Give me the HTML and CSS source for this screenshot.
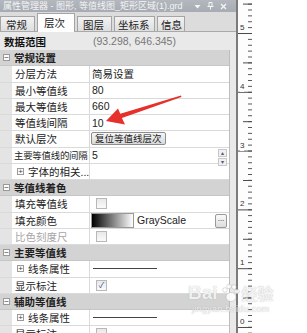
FILE: index.html
```html
<!DOCTYPE html>
<html lang="zh">
<head>
  <meta charset="UTF-8">
  <meta name="viewport" content="width=device-width, initial-scale=1.0">
  <title>属性管理器</title>
  <link rel="stylesheet" href="styles.css">
</head>
<body>
  <div class="app">
    <div class="panel">
      <div class="titlebar">
        <span class="title">属性管理器 - 图形, 等值线图_矩形区域(1).grd</span>
        <span class="ctrls">
          <svg width="7" height="7" viewBox="0 0 7 7"><path d="M0.5 2h6L3.5 5.5z" fill="#f6f6f6"/></svg>
          <svg width="7" height="8" viewBox="0 0 7 8"><path d="M2 0.5h3v4H2zM0.5 4.5h6M3.5 4.5v3" stroke="#f6f6f6" fill="none"/></svg>
          <svg width="7" height="7" viewBox="0 0 7 7"><path d="M1 1l5 5M6 1L1 6" stroke="#f6f6f6" stroke-width="1.3"/></svg>
        </span>
      </div>

      <div class="tabs">
        <div class="tab w35">常规</div>
        <div class="tab active">层次</div>
        <div class="tab w35">图层</div>
        <div class="tab w41">坐标系</div>
        <div class="tab w28">信息</div>
      </div>

      <div class="content">
        <div class="summary">
          <b>数据范围</b>
          <span class="range">(93.298, 646.345)</span>
        </div>

        <div class="grid">
          <div class="cat"><span class="tog">−</span>常规设置</div>
          <div class="row"><div class="gut"></div><div class="name">分层方法</div><div class="val">简易设置</div></div>
          <div class="row"><div class="gut"></div><div class="name">最小等值线</div><div class="val">80</div></div>
          <div class="row"><div class="gut"></div><div class="name">最大等值线</div><div class="val">660</div></div>
          <div class="row"><div class="gut"></div><div class="name">等值线间隔</div><div class="val">10</div></div>
          <div class="row"><div class="gut"></div><div class="name">默认层次</div><div class="val"><button class="btn">复位等值线层次</button></div></div>
          <div class="row"><div class="gut"></div><div class="name tight">主要等值线的间隔</div><div class="val">5<span class="spin"><i>▴</i><i>▾</i></span></div></div>
          <div class="row"><div class="gut"></div><div class="name sub"><span class="tog">+</span>字体的相关...</div><div class="val"></div></div>

          <div class="cat"><span class="tog">−</span>等值线着色</div>
          <div class="row"><div class="gut"></div><div class="name">填充等值线</div><div class="val"><span class="check"></span></div></div>
          <div class="row"><div class="gut"></div><div class="name">填充颜色</div><div class="val"><span class="ramp"></span>GrayScale<span class="more">...</span></div></div>
          <div class="row"><div class="gut"></div><div class="name disabled">比色刻度尺</div><div class="val"><span class="check"></span></div></div>

          <div class="cat"><span class="tog">−</span>主要等值线</div>
          <div class="row"><div class="gut"></div><div class="name sub"><span class="tog">+</span>线条属性</div><div class="val"><span class="line"></span></div></div>
          <div class="row"><div class="gut"></div><div class="name">显示标注</div><div class="val"><span class="check on">✓</span></div></div>

          <div class="cat"><span class="tog">−</span>辅助等值线</div>
          <div class="row"><div class="gut"></div><div class="name sub"><span class="tog">+</span>线条属性</div><div class="val"><span class="line"></span></div></div>
          <div class="row"><div class="gut"></div><div class="name">显示标注</div><div class="val"><span class="check"></span></div></div>
        </div>
      </div>
    </div>

    <div class="splitter"></div>

    <div class="ruler">
      <div class="seg first"><span>5</span></div>
      <div class="seg"><span>4</span></div>
      <div class="seg"><span>3</span></div>
      <div class="seg"><span>2</span></div>
      <div class="seg"><span>1</span></div>
      <div class="seg"><span>0</span></div>
    </div>
  </div>

  <!-- 红色箭头 -->
  <svg class="arrow" width="307" height="333" viewBox="0 0 307 333">
    <polygon points="106,121 118,108.5 120.3,113.8 181,95.6 181.4,96.9 121.9,118 125,124.5" fill="#e5302b"/>
  </svg>

  <div class="watermark">
    <div class="wm-top">Bai<svg width="20" height="20" viewBox="0 0 20 20"><circle cx="5" cy="7" r="2.3"/><circle cx="9" cy="3.5" r="2.3"/><circle cx="14" cy="4" r="2.3"/><circle cx="17" cy="8.5" r="2.3"/><ellipse cx="11" cy="14" rx="5" ry="4.5"/></svg><span class="cn">经验</span></div>
    <div class="wm-url">jingyan.baidu.com</div>
  </div>
</body>
</html>
```

FILE: styles.css
```css
/* 基本样式 */
body { margin: 0; width: 307px; height: 333px; overflow: hidden; background: #fff; font-family: "Liberation Sans", "Noto Sans CJK SC", sans-serif; font-size: 10px; color: #222; position: relative; }
.app { display: flex; height: 333px; }

.panel { width: 236px; background: #e9e9e9; display: flex; flex-direction: column; }

/* 标题栏 */
.titlebar { height: 12px; flex: none; display: flex; align-items: center; justify-content: space-between; padding: 0 9px 0 3px; background: linear-gradient(#b3b7be, #a7acb4); color: #f4f4f4; font-size: 9px; line-height: 12px; white-space: nowrap; }
.title { overflow: hidden; text-overflow: clip; }
.ctrls { display: flex; align-items: center; gap: 6px; padding-left: 8px; flex: none; }

/* 选项卡 */
.tabs { height: 19px; flex: none; display: flex; align-items: flex-end; gap: 2px; background: #dcdcdc; border-bottom: 1px solid #a9a9a9; }
.tab { height: 15px; box-sizing: border-box; padding-left: 5px; display: flex; align-items: center; font-size: 10.5px; background: linear-gradient(#f2f2f2, #dedede); border: 1px solid #a4a4a4; border-bottom: none; color: #222; }
.tab.w35 { width: 35px; }
.tab.w41 { width: 41px; padding-left: 3px; }
.tab.w28 { width: 28px; padding-left: 3px; }
.tab.active { width: 38px; height: 19px; margin-bottom: -1px; background: #fff; padding: 0 0 2px 6px; }

.content { flex: 1; padding-right: 6px; }

.summary { height: 18px; display: flex; align-items: center; padding-left: 4px; }
.summary b { width: 89px; font-size: 10.5px; color: #111; }
.range { color: #777; font-size: 10.5px; }

/* 属性表格 */
.grid { border-right: 1px solid #bdbdbd; }
.cat, .row { height: 16.25px; box-sizing: border-box; display: flex; align-items: center; }
.cat { background: #d3d3d3; font-weight: bold; font-size: 10.5px; color: #222; padding-left: 3px; border-bottom: 1px solid #c6c6c6; }
.cat .tog { margin-right: 4px; }
.row { border-bottom: 1px solid #dadada; background: #fff; }
.gut { width: 12px; height: 100%; background: #e4e4e4; flex: none; }
.name { width: 78px; height: 100%; box-sizing: border-box; padding-left: 3px; border-right: 1px solid #dadada; display: flex; align-items: center; font-size: 10.5px; white-space: nowrap; overflow: hidden; flex: none; }
.name.tight { font-size: 9.4px; letter-spacing: -0.2px; padding-left: 2px; }
.name.sub .tog { margin: 0 4px 0 2px; }
.name.disabled { color: #a6a6a6; }
.val { flex: 1; height: 100%; display: flex; align-items: center; padding-left: 2px; font-size: 10.5px; white-space: nowrap; position: relative; }

.tog { width: 7px; height: 7px; box-sizing: border-box; border: 1px solid #9a9a9a; background: #fbfbfb; font-size: 8px; line-height: 5px; text-align: center; font-weight: normal; color: #444; flex: none; }

.btn { height: 13px; padding: 0 3px; margin-left: -1px; font-family: inherit; font-size: 9.5px; line-height: 11px; border: 1px solid #8d8d8d; border-radius: 2px; background: linear-gradient(#f6f6f6, #d9d9d9); color: #222; }

.spin { position: absolute; right: 2px; top: 1px; display: flex; flex-direction: column; width: 9px; }
.spin i { height: 6px; font-style: normal; font-size: 6px; line-height: 6px; text-align: center; color: #556; background: #eef0f4; border: 1px solid #c8c8c8; margin-bottom: 1px; }

.check { width: 9px; height: 9px; margin-left: 4px; border: 1px solid #b8b8b8; background: linear-gradient(#e8e8e8, #fafafa); font-size: 8px; line-height: 9px; text-align: center; color: #2e4e8a; }

.ramp { width: 41px; height: 13px; margin-left: -1px; margin-right: 3px; border: 1px solid #999; background: linear-gradient(to right, #000, #fff); }
.more { position: absolute; right: 2px; top: 1px; width: 10px; height: 12px; border: 1px solid #999; border-radius: 2px; background: linear-gradient(#fafafa, #dcdcdc); font-size: 8px; line-height: 8px; text-align: center; }

.line { width: 64px; height: 1px; margin-left: 1px; background: #444; }

/* 分隔条与标尺 */
.splitter { width: 2px; background: #7b7b7b; }
.ruler { width: 14px; background-color: #fdfdfd;
  background-image:
    linear-gradient(to bottom, #4a4a4a 0 1px, transparent 1px),
    linear-gradient(to bottom, #4a4a4a 0 1px, transparent 1px),
    linear-gradient(to bottom, #555 0 1px, transparent 1px);
  background-size: 14px 58.8px, 9px 58.8px, 4px 5.88px;
  background-position: 0 33px, right 0 top 62.4px, right 0 top 33px;
  background-repeat: repeat-y; }
.seg { height: 58.8px; display: flex; align-items: flex-end; padding-left: 2px; font-size: 8px; line-height: 9px; color: #333; }
.seg.first { height: 33px; }
.seg span { padding-bottom: 1px; background: #fdfdfd; }

/* 覆盖层 */
.arrow { position: absolute; left: 0; top: 0; pointer-events: none; }
.watermark { position: absolute; left: 188px; top: 282px; color: rgba(255,255,255,0.85); text-shadow: 0 0 1px rgba(120,120,120,0.6); pointer-events: none; }
.wm-top { display: flex; align-items: center; font-size: 19px; font-weight: bold; line-height: 22px; }
.wm-top svg { fill: rgba(255,255,255,0.85); stroke: rgba(140,140,140,0.5); stroke-width: 0.6; margin: 0 2px; }
.wm-top .cn { font-family: "Noto Sans CJK SC", sans-serif; font-size: 16px; }
.wm-url { font-size: 9px; padding-left: 4px; letter-spacing: 0.3px; }
```
